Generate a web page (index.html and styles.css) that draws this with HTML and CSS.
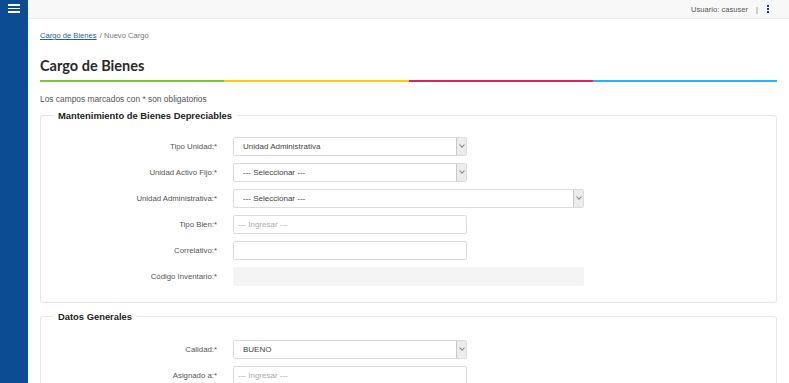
FILE: index.html
```html
<!DOCTYPE html>
<html lang="es">
<head>
    <meta charset="UTF-8">
    <meta name="viewport" content="width=device-width, initial-scale=1.0">
    <title>Cargo de Bienes</title>
    <link rel="stylesheet" href="styles.css">
</head>
<body>
    <!-- Side menu -->
    <aside class="sidebar">
        <div class="menu-btn">
            <span></span><span></span><span></span>
        </div>
    </aside>

    <div class="main">
        <!-- Top bar -->
        <header class="topbar">
            <span class="user">Usuario: casuser</span>
            <span class="sep">|</span>
            <span class="kebab"><i></i><i></i><i></i></span>
        </header>

        <div class="content">
            <div class="breadcrumb">
                <a href="#">Cargo de Bienes</a> <span>/ Nuevo Cargo</span>
            </div>

            <h1>Cargo de Bienes</h1>
            <div class="color-line">
                <span class="green"></span>
                <span class="yellow"></span>
                <span class="pink"></span>
                <span class="blue"></span>
            </div>

            <p class="note">Los campos marcados con * son obligatorios</p>

            <fieldset>
                <legend>Mantenimiento de Bienes Depreciables</legend>
                <div class="row">
                    <label>Tipo Unidad:*</label>
                    <div class="field select">Unidad Administrativa<b class="arrow"></b></div>
                </div>
                <div class="row">
                    <label>Unidad Activo Fijo:*</label>
                    <div class="field select">--- Seleccionar ---<b class="arrow"></b></div>
                </div>
                <div class="row">
                    <label>Unidad Administrativa:*</label>
                    <div class="field select wide">--- Seleccionar ---<b class="arrow"></b></div>
                </div>
                <div class="row">
                    <label>Tipo Bien:*</label>
                    <div class="field placeholder">--- Ingresar ---</div>
                </div>
                <div class="row">
                    <label>Correlativo:*</label>
                    <div class="field"></div>
                </div>
                <div class="row">
                    <label>Código Inventario:*</label>
                    <div class="field wide disabled"></div>
                </div>
            </fieldset>

            <fieldset class="second">
                <legend>Datos Generales</legend>
                <div class="row">
                    <label>Calidad:*</label>
                    <div class="field select">BUENO<b class="arrow"></b></div>
                </div>
                <div class="row">
                    <label>Asignado a:*</label>
                    <div class="field placeholder">--- Ingresar ---</div>
                </div>
            </fieldset>
        </div>
    </div>
</body>
</html>
```

FILE: styles.css
```css
/* Basic page styling */
body {
    margin: 0;
    padding: 0;
    display: flex;
    height: 100vh;
    overflow: hidden;
    font-family: "Liberation Sans", Arial, sans-serif;
    font-size: 8px;
    color: #555;
    background-color: #ffffff;
}

/* Side menu */
.sidebar {
    width: 28px;
    flex-shrink: 0;
    background-color: #0b4c92;
}

.menu-btn {
    display: flex;
    flex-direction: column;
    gap: 2px;
    padding: 4px 0 0 8px;
}

.menu-btn span {
    display: block;
    width: 12px;
    height: 1.5px;
    background-color: #ffffff;
}

.main {
    flex: 1;
    display: flex;
    flex-direction: column;
    min-width: 0;
}

/* Top bar */
.topbar {
    height: 18px;
    flex-shrink: 0;
    display: flex;
    align-items: center;
    justify-content: flex-end;
    background-color: #f8f8f8;
    border-bottom: 1px solid #ececec;
    padding-right: 20px;
    font-size: 7.6px;
    color: #555;
}

.sep {
    margin: 0 9px 0 8px;
    color: #777;
}

.kebab {
    display: flex;
    flex-direction: column;
    gap: 1px;
}

.kebab i {
    width: 2px;
    height: 2px;
    background-color: #1d3f6e;
}

/* Page content */
.content {
    padding: 0 12px;
}

.breadcrumb {
    margin-top: 12px;
    font-size: 7.6px;
    color: #777;
}

.breadcrumb a {
    color: #1f5fa8;
    text-decoration: underline;
    margin-right: 1px;
}

h1 {
    font-family: Lato, "Open Sans", sans-serif;
    font-weight: 700;
    font-size: 14.5px;
    color: #2a2a2a;
    margin: 17px 0 6px 0;
}

.color-line {
    display: flex;
    height: 2px;
}

.color-line span {
    flex: 1;
}

.green { background-color: #80c342; }
.yellow { background-color: #fcc90e; }
.pink { background-color: #d9245d; }
.blue { background-color: #2bb3ee; }

.note {
    font-size: 8.4px;
    color: #555;
    margin: 12px 0 6px 0;
}

/* Form sections */
fieldset {
    border: 1px solid #e6e6e6;
    border-radius: 3px;
    margin: 0;
    padding: 16px 0 9px 0;
}

fieldset.second {
    margin-top: 8px;
    padding-top: 18px;
}

legend {
    font-size: 9.4px;
    font-weight: bold;
    color: #222;
    margin-left: 12px;
    padding: 0 5px;
}

.row {
    display: flex;
    align-items: center;
    height: 19px;
    margin-bottom: 7px;
}

.row label {
    width: 176px;
    padding-right: 16px;
    text-align: right;
    flex-shrink: 0;
    font-size: 7.8px;
}

.field {
    position: relative;
    box-sizing: border-box;
    width: 234px;
    height: 19px;
    border: 1px solid #dcdcdc;
    border-radius: 2px;
    padding: 0 9px;
    line-height: 17px;
    color: #444;
    background-color: #ffffff;
}

.field.wide {
    width: 351px;
}

.field.placeholder {
    color: #aaa;
    padding-left: 4px;
}

.field.disabled {
    background-color: #f4f4f4;
    border-color: #f4f4f4;
}

/* Select arrow box */
.arrow {
    position: absolute;
    top: 0;
    right: 0;
    width: 9px;
    height: 17px;
    background-color: #ececec;
    border-left: 1px solid #c8c8c8;
}

.arrow::after {
    content: "";
    position: absolute;
    top: 5px;
    left: 2.5px;
    width: 3px;
    height: 3px;
    border-right: 1px solid #888;
    border-bottom: 1px solid #888;
    transform: rotate(45deg);
}
```
